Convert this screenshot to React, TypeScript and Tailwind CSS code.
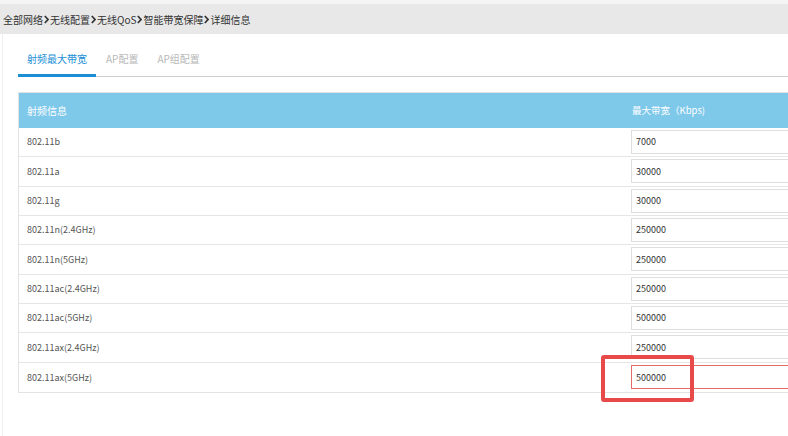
import React from "react";

const crumbs = ["全部网络", "无线配置", "无线QoS", "智能带宽保障", "详细信息"];

const rows = [
  { name: "802.11b", value: "7000" },
  { name: "802.11a", value: "30000" },
  { name: "802.11g", value: "30000" },
  { name: "802.11n(2.4GHz)", value: "250000" },
  { name: "802.11n(5GHz)", value: "250000" },
  { name: "802.11ac(2.4GHz)", value: "250000" },
  { name: "802.11ac(5GHz)", value: "500000" },
  { name: "802.11ax(2.4GHz)", value: "250000" },
  { name: "802.11ax(5GHz)", value: "500000" },
];

function Chevron() {
  return (
    <svg width="5" height="9" viewBox="0 0 5 9" className="mx-[1px]">
      <path d="M0.8 1 L4 4.5 L0.8 8" fill="none" stroke="#333" strokeWidth="1.7" />
    </svg>
  );
}

export default function App() {
  const font = { fontFamily: '"Noto Sans CJK SC", "Noto Sans", sans-serif' };

  return (
    <div className="relative w-[788px] h-[436px] overflow-hidden bg-white" style={font}>
      <div className="h-[4px] bg-[#f4f4f4]" />
      <div className="h-[30px] bg-[#e8e8e8] flex items-center pl-[3px] text-[10px] text-[#333]">
        {crumbs.map((c, i) => (
          <React.Fragment key={c}>
            {i > 0 && <Chevron />}
            <span>{c}</span>
          </React.Fragment>
        ))}
      </div>

      <div className="border-l border-[#f0f0f0] ml-[2px] h-[402px] pl-[15px]">
        {/* tabs */}
        <div className="flex items-end h-[43px] border-b border-[#cfcfcf]">
          <div className="relative w-[78px] h-full flex items-center justify-center pt-[6px] text-[10px] text-[#1a8fd6]">
            射频最大带宽
            <div className="absolute left-0 right-0 bottom-[-1px] h-[3px] bg-[#1a8fd6]" />
          </div>
          <div className="h-full flex items-center pt-[6px] pl-[10px] text-[10px] text-[#b8b8b8]">AP配置</div>
          <div className="h-full flex items-center pt-[6px] pl-[19px] text-[10px] text-[#b8b8b8]">AP组配置</div>
        </div>

        {/* table */}
        <div className="mt-[15px] w-[800px] border border-[#e3e3e3] text-[9px]">
          <div className="h-[35px] bg-[#7ec8ea] flex items-center text-white">
            <div className="w-[613px] pl-[8px] text-[10px]">射频信息</div>
            <div className="text-[9.5px]">最大带宽（Kbps)</div>
          </div>
          {rows.map((r, i) => (
            <div
              key={r.name}
              className={`h-[29.33px] flex items-center text-[#555] ${i < rows.length - 1 ? "border-b border-[#e6e6e6]" : ""}`}
            >
              <div className="w-[612px] pl-[8px]">{r.name}</div>
              <div
                className={`h-[24px] flex-1 flex items-center pl-[4px] text-[#333] border ${
                  i === rows.length - 1 ? "border-[#e46a6a]" : "border-[#dedede]"
                }`}
              >
                {r.value}
              </div>
            </div>
          ))}
        </div>
      </div>

      {/* annotation box */}
      <div className="absolute left-[601px] top-[355px] w-[93px] h-[47px] border-[4px] border-[#e84a4a] rounded-[3px]" />
    </div>
  );
}
